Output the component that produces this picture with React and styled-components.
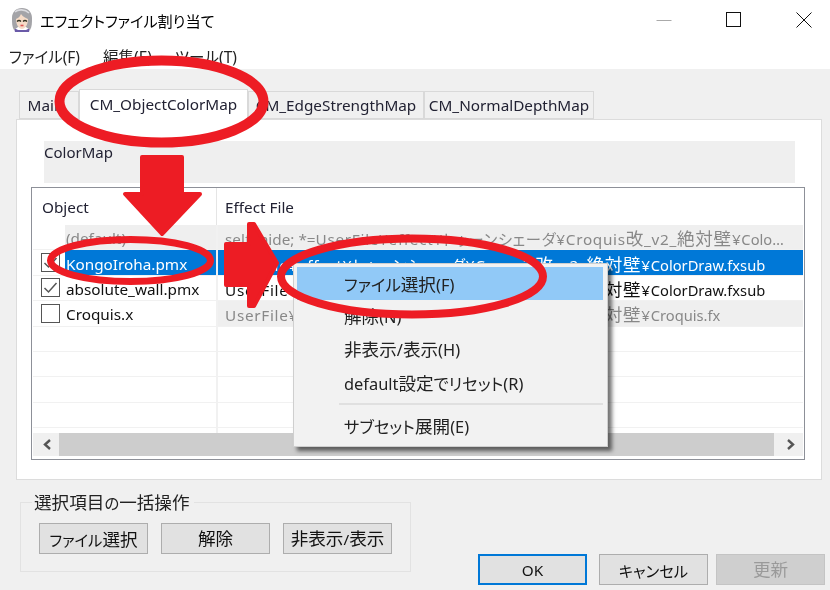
import React from "react";
import styled, { createGlobalStyle } from "styled-components";

const FONT = `"Noto Sans", "Noto Sans CJK JP", sans-serif`;

const GlobalStyle = createGlobalStyle`
  html, body {
    margin: 0;
    padding: 0;
    background: #fff;
  }
  * {
    box-sizing: border-box;
  }
`;

const Page = styled.div`
  position: relative;
  width: 830px;
  height: 590px;
  overflow: hidden;
`;

const Window = styled.div`
  display: flex;
  flex-direction: column;
  width: 830px;
  height: 590px;
  font-family: ${FONT};
  font-size: 15.3px;
  font-feature-settings: "palt";
  color: #111;
  filter: blur(0.35px);
`;

const TitleBar = styled.div`
  display: flex;
  align-items: center;
  height: 46px;
  padding: 0 18px 6px 11px;
  background: #fff;
`;

const TitleText = styled.div`
  margin-left: 7px;
  flex: 1;
  font-size: 15.2px;
  color: #000;
`;

const WindowControls = styled.div`
  display: flex;
  align-items: center;
  gap: 54px;
  height: 16px;
`;

const MenuBar = styled.div`
  display: flex;
  align-items: center;
  gap: 23px;
  height: 23px;
  padding: 0 0 3px 9px;
  background: #fff;
`;

const MenuLabel = styled.span`
  font-size: 15.5px;
  color: #222;
`;

const Content = styled.div`
  flex: 1;
  display: flex;
  flex-direction: column;
  padding-top: 20px;
  background: #f0f0f0;
`;

const TabStrip = styled.div`
  display: flex;
  align-items: flex-end;
  height: 30px;
  padding-left: 19px;
`;

const Tab = styled.div`
  position: relative;
  display: flex;
  justify-content: center;
  align-items: center;
  width: ${({ $width }) => $width}px;
  height: ${({ $active }) => ($active ? 31 : 28)}px;
  margin-bottom: ${({ $active }) => ($active ? -1 : 0)}px;
  padding-bottom: ${({ $active }) => ($active ? 3 : 0)}px;
  padding-right: ${({ $inset }) => $inset || 0}px;
  background: ${({ $active }) => ($active ? "#fff" : "#f0f0f0")};
  border: 1px solid #d9d9d9;
  border-bottom: ${({ $active }) => ($active ? "none" : "1px solid #d9d9d9")};
  z-index: ${({ $active }) => ($active ? 1 : 0)};
  color: #223;
`;

const Panel = styled.div`
  height: 361px;
  width: 806px;
  margin-left: 16px;
  padding: 21px 0 0 14px;
  background: #fff;
  border: 1px solid #dcdcdc;
`;

const MapBox = styled.div`
  height: 42px;
  width: 751px;
  margin-left: 13px;
  background: #efefef;
  line-height: 22px;
  font-size: 15px;
  color: #223;
`;

const List = styled.div`
  display: flex;
  flex-direction: column;
  width: 774px;
  height: 273px;
  margin-top: 4px;
  padding: 0 1px 3px 1px;
  border: 1px solid #8d9098;
  background: #fff;
`;

const ListHeader = styled.div`
  display: grid;
  grid-template-columns: 184px 1fr;
  height: 37px;
  flex: none;
`;

const HeaderCell = styled.div`
  display: flex;
  align-items: center;
  padding-left: ${({ $first }) => ($first ? 9 : 8)}px;
  border-right: ${({ $first }) => ($first ? "1px solid #e5e5e5" : "none")};
  color: #223;
`;

const Rows = styled.div`
  flex: 1;
  min-height: 0;
  overflow: hidden;
`;

const Row = styled.div`
  display: grid;
  grid-template-columns: 185px 1fr;
  height: 25.4px;
  border-bottom: 1.5px solid #f1f1f1;
`;

const NameCell = styled.div`
  display: flex;
  align-items: center;
  padding-left: 8px;
  border-right: 2px solid #f1f1f1;
`;

const CheckSlot = styled.div`
  display: flex;
  align-items: center;
  width: 24px;
  height: 100%;
  flex: none;
`;

const Box = styled.div`
  display: flex;
  align-items: center;
  justify-content: center;
  width: 19px;
  height: 19px;
  border: 1.5px solid #555;
  background: #fff;
`;

const rowBg = (kind, cell) => {
  if (kind === "selected") return "#0078d7";
  if (kind === "default") return "#efefef";
  if (kind === "muted" && cell === "file") return "#efefef";
  return "#fff";
};

const rowColor = (kind) => {
  if (kind === "selected") return "#fff";
  if (kind === "default" || kind === "muted") return "#888";
  return "#111";
};

const NameText = styled.div`
  flex: 1;
  height: 100%;
  display: flex;
  align-items: center;
  padding: 2px 0 0 1px;
  background: ${({ $kind }) => rowBg($kind, "name")};
  color: ${({ $kind }) => ($kind === "muted" ? "#111" : rowColor($kind))};
`;

const FileCell = styled.div`
  display: flex;
  align-items: center;
  padding: 2px 0 0 7px;
  white-space: nowrap;
  overflow: hidden;
  background: ${({ $kind }) => rowBg($kind, "file")};
  color: ${({ $kind }) => rowColor($kind)};
`;

const PathDir = styled.span`
  letter-spacing: 0.7px;
`;

const PathFile = styled.span`
  font-size: 14.7px;
`;

const ScrollBar = styled.div`
  display: flex;
  flex: none;
  height: 23px;
`;

const ScrollButton = styled.div`
  display: flex;
  align-items: center;
  justify-content: center;
  width: ${({ $width }) => $width}px;
  padding-left: ${({ $nudge }) => $nudge || 0}px;
  flex: none;
  background: #f0f0f0;
`;

const ScrollTrack = styled.div`
  flex: 1;
  background: #cdcdcd;
`;

const Footer = styled.div`
  display: flex;
  align-items: flex-start;
  padding: 22px 5px 0 20px;
`;

const Group = styled.div`
  position: relative;
  display: flex;
  gap: 13px;
  width: 391px;
  height: 70px;
  padding: 20px 0 0 18px;
  border: 1.5px solid #e2e2e2;
`;

const Legend = styled.div`
  position: absolute;
  left: 11px;
  top: -10px;
  padding: 0 4px 0 2px;
  background: #f0f0f0;
  color: #222;
  line-height: 20px;
`;

const Button = styled.div`
  display: flex;
  align-items: center;
  justify-content: center;
  width: 109px;
  height: 31px;
  background: ${({ $disabled }) => ($disabled ? "#cfcfcf" : "#e1e1e1")};
  border: ${({ $primary }) => ($primary ? "2px solid #0078d7" : "1.5px solid #adadad")};
  border-color: ${({ $disabled }) => ($disabled ? "#c4c4c4" : undefined)};
  color: ${({ $disabled }) => ($disabled ? "#9a9a9a" : "#111")};
`;

const Actions = styled.div`
  display: flex;
  margin: 52px 0 0 auto;
`;

const ActionButton = styled(Button)`
  margin-left: ${({ $gap }) => $gap}px;
`;

const ContextMenu = styled.div`
  position: absolute;
  left: 293px;
  top: 263px;
  width: 315px;
  height: 184px;
  padding: 3px 4px 0 3px;
  background: #f2f2f2;
  border: 1px solid #cfcfcf;
  box-shadow: 4px 4px 4px rgba(0, 0, 0, 0.55);
`;

const MenuItem = styled.div`
  display: flex;
  align-items: center;
  height: 33px;
  padding-left: 47px;
  font-size: 16.4px;
  background: ${({ $active }) => ($active ? "#91c9f7" : "transparent")};
  color: #222;
`;

const MenuSeparator = styled.div`
  height: 2px;
  margin: 4px 0 4px 42px;
  background: #e0e0e0;
`;

const Annotations = styled.svg`
  position: absolute;
  left: 0;
  top: 0;
  width: 830px;
  height: 590px;
  pointer-events: none;
`;

// kanji come out wider than the kana in this dialog's UI font
const Kanji = styled.span`
  font-size: 17.6px;
  line-height: 1;
`;

const Mixed = ({ children }) => (
  <span>
    {children.split(/([\u4e00-\u9fff]+)/).map((part, i) =>
      i % 2 ? <Kanji key={i}>{part}</Kanji> : part
    )}
  </span>
);

const tabs = [
  { label: "Main", width: 60, inset: 7 },
  { label: "CM_ObjectColorMap", width: 169, active: true },
  { label: "CM_EdgeStrengthMap", width: 176 },
  { label: "CM_NormalDepthMap", width: 170 },
];

const dir = "UserFile¥effect¥トゥーンシェーダ¥Croquis改_v2_絶対壁¥";

const rows = [
  { name: "(default)", before: "self=hide; *=", tail: "Colo…", kind: "default" },
  { name: "KongoIroha.pmx", tail: "ColorDraw.fxsub", kind: "selected", check: true, checked: true },
  { name: "absolute_wall.pmx", tail: "ColorDraw.fxsub", kind: "plain", check: true, checked: true },
  { name: "Croquis.x", tail: "Croquis.fx", kind: "muted", check: true },
  { kind: "plain" },
  { kind: "plain" },
  { kind: "plain" },
  { kind: "plain" },
  { kind: "plain" },
];

const AppIcon = () => (
  <svg width="22" height="26" viewBox="0 0 22 26">
    <path d="M3 21 L7 23 L15 23 L19 21 L18 25 L4 25 Z" fill="#6a5aa8" />
    <path d="M11 1 C5 1 1 5 1 11 C1 16 1 20 3 23 L7 20 L15 20 L19 23 C21 20 21 16 21 11 C21 5 17 1 11 1 Z" fill="#a4a4a8" />
    <path d="M5 12 C8 11 9 9 10 7 C12 10 15 11 17 12 C17 18 14 22 11 22 C8 22 5 18 5 12 Z" fill="#f6dcc8" />
    <path d="M6 14.5 Q8 12.5 10 14.5 M12 14.5 Q14 12.5 16 14.5" stroke="#332" strokeWidth="1.3" fill="none" />
    <path d="M9.5 18.5 H12.5" stroke="#d55" strokeWidth="1.6" />
    <path d="M4 5 C7 2 14 2 18 6" stroke="#dcdce0" strokeWidth="1.6" fill="none" />
  </svg>
);

const Check = () => (
  <svg width="15" height="15" viewBox="0 0 15 15">
    <path d="M1.5 8 L5.5 12 L13.5 3" stroke="#555" strokeWidth="1.5" fill="none" />
  </svg>
);

const Chevron = ({ right }) => (
  <svg width="9" height="11" viewBox="0 0 9 11">
    <path d={right ? "M2 1 L7 5.5 L2 10" : "M7 1 L2 5.5 L7 10"} stroke="#555" strokeWidth="2.4" fill="none" />
  </svg>
);

const App = () => {
  return (
    <Page>
      <GlobalStyle />
      <Window>
        <TitleBar>
          <AppIcon />
          <TitleText>エフェクトファイル割り当て</TitleText>
          <WindowControls>
            <svg width="16" height="16" viewBox="0 0 16 16">
              <path d="M0.5 8.5 H15.5" stroke="#aaa" />
            </svg>
            <svg width="16" height="16" viewBox="0 0 16 16">
              <rect x="0.5" y="0.5" width="14" height="14" stroke="#111" fill="none" />
            </svg>
            <svg width="16" height="16" viewBox="0 0 16 16">
              <path d="M0.5 0.5 L15.5 15.5 M15.5 0.5 L0.5 15.5" stroke="#111" />
            </svg>
          </WindowControls>
        </TitleBar>
        <MenuBar>
          <MenuLabel>ファイル(F)</MenuLabel>
          <MenuLabel>編集(E)</MenuLabel>
          <MenuLabel>ツール(T)</MenuLabel>
        </MenuBar>
        <Content>
          <TabStrip>
            {tabs.map((t) => (
              <Tab key={t.label} $width={t.width} $active={t.active} $inset={t.inset}>
                {t.label}
              </Tab>
            ))}
          </TabStrip>
          <Panel>
            <MapBox>ColorMap</MapBox>
            <List>
              <ListHeader>
                <HeaderCell $first>Object</HeaderCell>
                <HeaderCell>Effect File</HeaderCell>
              </ListHeader>
              <Rows>
                {rows.map((r, i) => (
                  <Row key={i}>
                    <NameCell>
                      <CheckSlot>
                        {r.check && <Box>{r.checked && <Check />}</Box>}
                      </CheckSlot>
                      {r.name && <NameText $kind={r.kind}>{r.name}</NameText>}
                    </NameCell>
                    <FileCell $kind={r.tail ? r.kind : "plain"}>
                      {r.tail && (
                        <span>
                          {r.before}
                          <PathDir><Mixed>{dir}</Mixed></PathDir>
                          <PathFile>{r.tail}</PathFile>
                        </span>
                      )}
                    </FileCell>
                  </Row>
                ))}
              </Rows>
              <ScrollBar>
                <ScrollButton $width={26} $nudge={2}>
                  <Chevron />
                </ScrollButton>
                <ScrollTrack />
                <ScrollButton $width={29} $nudge={4}>
                  <Chevron right />
                </ScrollButton>
              </ScrollBar>
            </List>
          </Panel>
          <Footer>
            <Group>
              <Legend><Mixed>選択項目の一括操作</Mixed></Legend>
              <Button><Mixed>ファイル選択</Mixed></Button>
              <Button><Mixed>解除</Mixed></Button>
              <Button><Mixed>非表示/表示</Mixed></Button>
            </Group>
            <Actions>
              <Button $primary>OK</Button>
              <ActionButton $gap={12}>キャンセル</ActionButton>
              <ActionButton $gap={8} $disabled><Mixed>更新</Mixed></ActionButton>
            </Actions>
          </Footer>
        </Content>
        <ContextMenu>
          <MenuItem $active><Mixed>ファイル選択(F)</Mixed></MenuItem>
          <MenuItem><Mixed>解除(N)</Mixed></MenuItem>
          <MenuItem><Mixed>非表示/表示(H)</Mixed></MenuItem>
          <MenuItem><Mixed>default設定でリセット(R)</Mixed></MenuItem>
          <MenuSeparator />
          <MenuItem><Mixed>サブセット展開(E)</Mixed></MenuItem>
        </ContextMenu>
      </Window>
      <Annotations viewBox="0 0 830 590">
        <g fill="none" stroke="#ed1c24">
          <ellipse cx="161.5" cy="101.5" rx="102" ry="41" strokeWidth="10" />
          <ellipse cx="130.5" cy="260.5" rx="80" ry="21" strokeWidth="7" />
          <ellipse cx="412" cy="276.5" rx="131" ry="38" strokeWidth="8" />
        </g>
        <g fill="#ed1c24" stroke="#ed1c24" strokeWidth="4" strokeLinejoin="round">
          <path d="M142 157 H182 V194 H200 L162 234 L125 194 H142 Z" />
          <path d="M226 244 H249 V224 H254 L277 263 L254 306 H249 V285 H226 Z" />
        </g>
      </Annotations>
    </Page>
  );
};

export default App;
